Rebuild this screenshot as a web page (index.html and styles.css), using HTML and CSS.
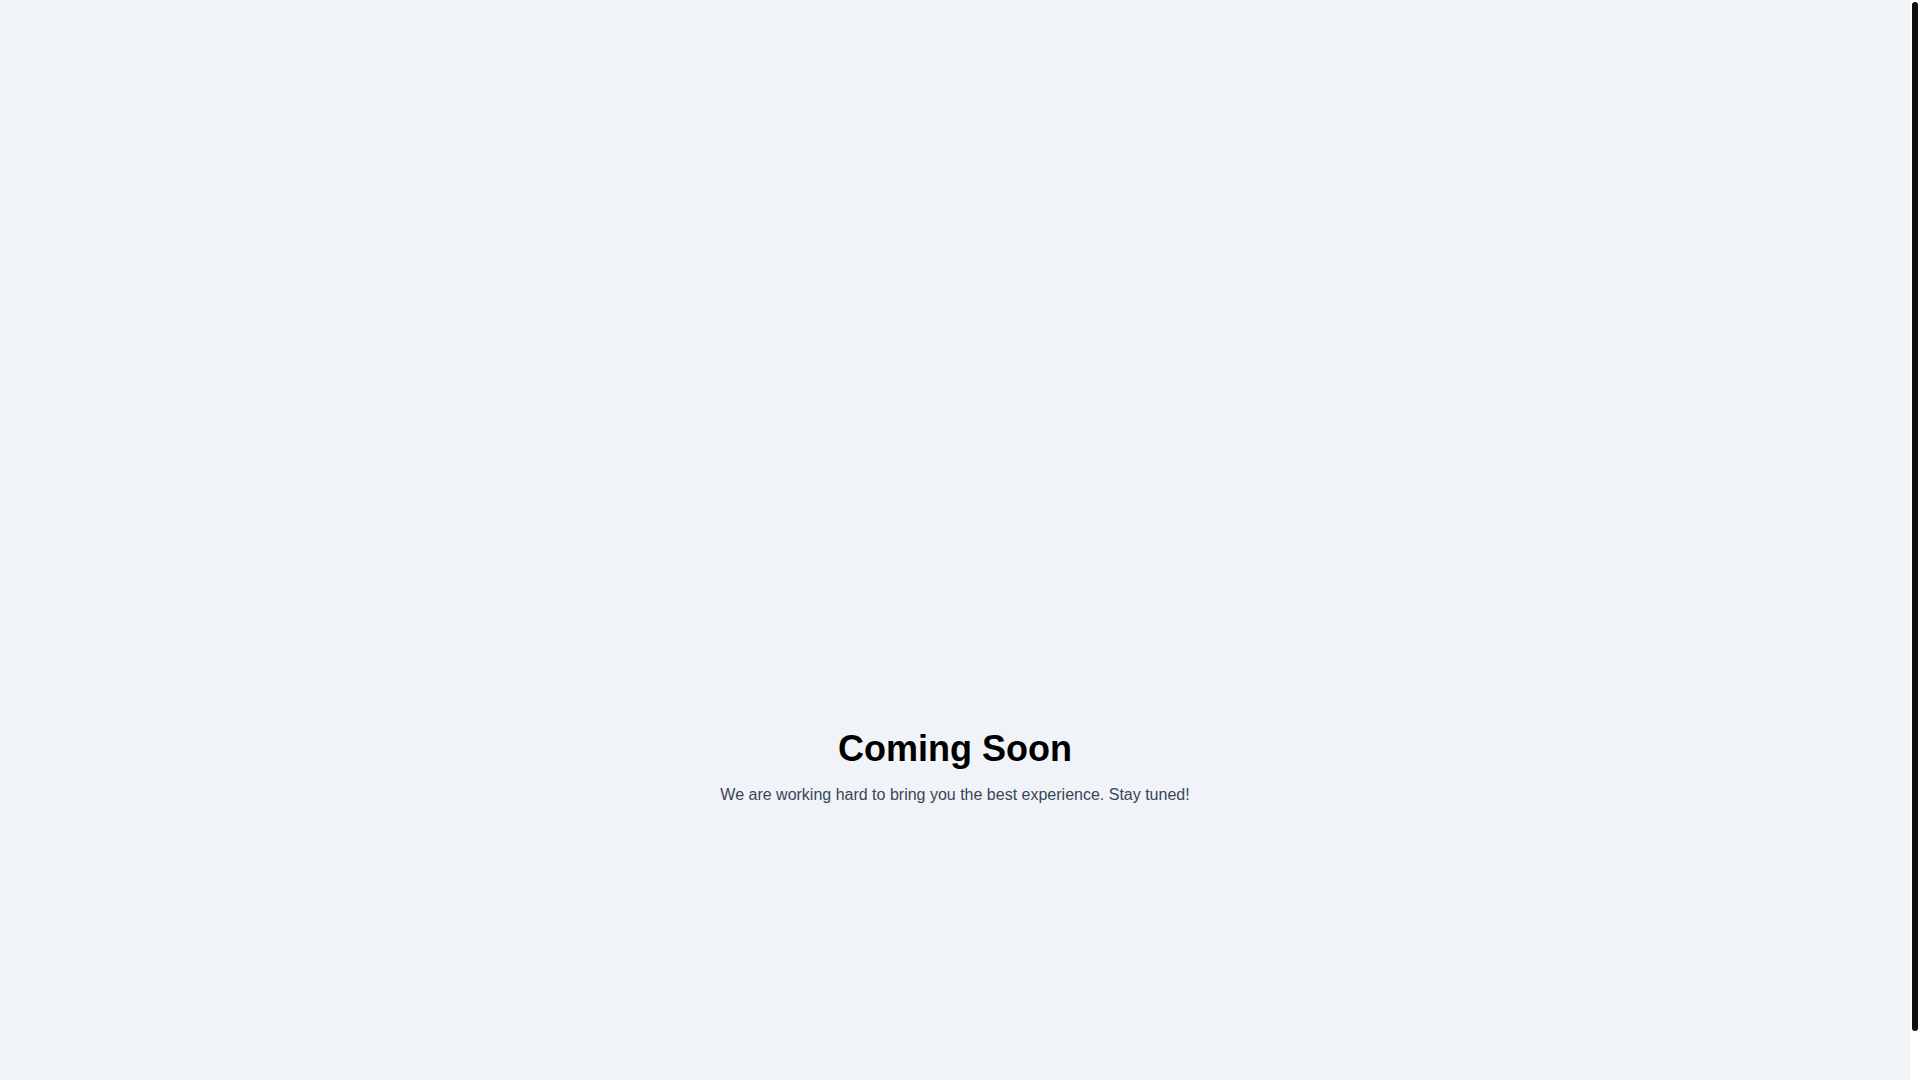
FILE: index.html
```html
<!DOCTYPE html>
<html lang="en">
<head>
<meta charset="utf-8">
<title>Coming Soon</title>
<link rel="stylesheet" href="styles.css">
</head>
<body>
<main class="page">
  <section class="hero">
    <h1 class="title">Coming Soon</h1>
    <p class="subtitle">We are working hard to bring you the best experience. Stay tuned!</p>
  </section>
</main>
<div class="scrollbar" aria-hidden="true"><div class="scrollbar-thumb"></div></div>
</body>
</html>
```
FILE: styles.css
```css
html, body {
  margin: 0;
  padding: 0;
  background: #f0f4f8;
}
body {
  font-family: "Liberation Sans", Arial, sans-serif;
  padding-right: 10px;
}
.page {
  display: flex;
  flex-direction: column;
  align-items: center;
  padding: 728px 0 324px;
}
.hero {
  text-align: center;
}
.title {
  margin: 0 0 16px;
  font-size: 36px;
  font-weight: 700;
  color: #000000;
}
.subtitle {
  margin: 0;
  font-size: 16px;
  color: #3b4556;
}
.scrollbar {
  position: fixed;
  top: 0;
  right: 0;
  width: 10px;
  height: 100vh;
  background: #ffffff;
  box-sizing: border-box;
  padding: 2px;
}
.scrollbar-thumb {
  width: 6px;
  height: 1029px;
  background: #111111;
  border-radius: 3px;
}
```
